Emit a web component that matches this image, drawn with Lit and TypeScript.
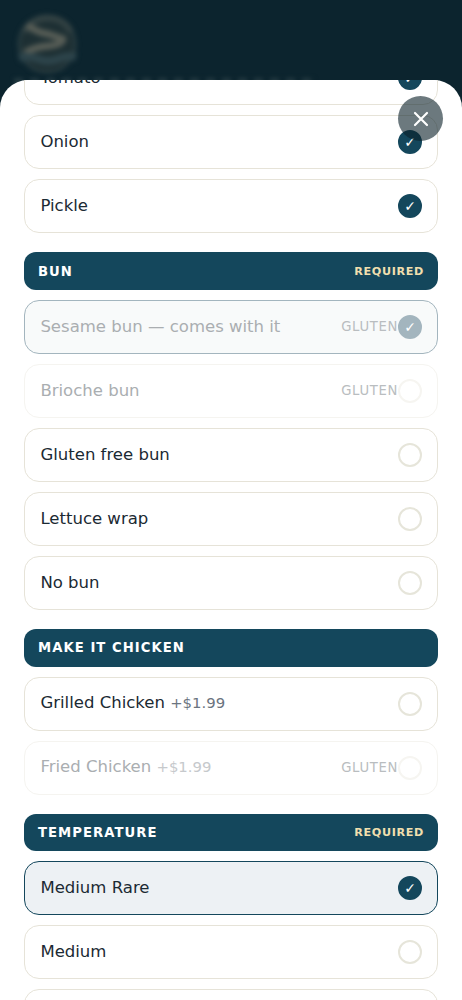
import { LitElement, html, css, nothing } from "lit";
import { customElement, property } from "lit/decorators.js";
import { classMap } from "lit/directives/class-map.js";

interface Choice {
  name: string;
  price?: string;
  flag?: string;
  state?: "checked" | "selected";
}

interface Group {
  title: string;
  required?: boolean;
  choices: Choice[];
}

const groups: Group[] = [
  {
    title: "",
    choices: [
      { name: "Tomato", state: "checked" },
      { name: "Onion", state: "checked" },
      { name: "Pickle", state: "checked" },
    ],
  },
  {
    title: "Bun",
    required: true,
    choices: [
      { name: "Sesame bun — comes with it", flag: "Gluten", state: "selected" },
      { name: "Brioche bun", flag: "Gluten" },
      { name: "Gluten free bun" },
      { name: "Lettuce wrap" },
      { name: "No bun" },
    ],
  },
  {
    title: "Make it chicken",
    choices: [
      { name: "Grilled Chicken", price: "+$1.99" },
      { name: "Fried Chicken", price: "+$1.99", flag: "Gluten" },
    ],
  },
  {
    title: "Temperature",
    required: true,
    choices: [
      { name: "Medium Rare", state: "selected" },
      { name: "Medium" },
      { name: "" },
    ],
  },
];

@customElement("option-row")
export class OptionRow extends LitElement {
  @property({ attribute: false }) choice!: Choice;

  static styles = css`
    :host {
      display: block;
    }
    .row {
      box-sizing: border-box;
      display: flex;
      align-items: center;
      height: 54px;
      padding: 0 15px 0 15.4px;
      border: 1px solid #e6e3d8;
      border-radius: 15px;
      background: #fff;
      color: #1b2a33;
      font-size: 16.53px;
    }
    .row.selected {
      border-color: #14475c;
      background: #edf1f4;
    }
    .row.flagged {
      border-color: #f5f4f0;
      color: #aaaeb1;
    }
    .row.flagged.selected {
      border-color: #a3b5be;
      background: #f8fafa;
    }
    .name {
      flex: 1;
      line-height: 20px;
      padding-bottom: 1px;
    }
    .price {
      color: #6b7480;
      font-size: 14.85px;
    }
    .flagged .price {
      color: #c6c9cc;
    }
    .flag {
      padding-bottom: 1px;
      color: #b9bdc0;
      font-size: 13.2px;
      letter-spacing: 0.66px;
      text-transform: uppercase;
    }
    .mark {
      box-sizing: border-box;
      display: grid;
      place-items: center;
      width: 24px;
      height: 24px;
      border: 2px solid #e6e5da;
      border-radius: 50%;
      color: #fff;
      font-size: 14px;
      font-weight: 700;
      line-height: 1;
    }
    .flagged .mark {
      border-color: #f6f5f1;
    }
    .checked .mark,
    .selected .mark {
      border-color: #14475c;
      background: #14475c;
    }
    .flagged.selected .mark {
      border-color: #a3b5be;
      background: #a3b5be;
    }
  `;

  render() {
    const { name, price, flag, state } = this.choice;
    return html`<div
      class=${classMap({
        row: true,
        flagged: !!flag,
        checked: state === "checked",
        selected: state === "selected",
      })}
    >
      <span class="name"
        >${name}${price ? html` <span class="price">${price}</span>` : nothing}</span
      >
      ${flag ? html`<span class="flag">${flag}</span>` : nothing}
      <span class="mark">${state ? "✓" : nothing}</span>
    </div>`;
  }
}

@customElement("app-root")
export class AppRoot extends LitElement {
  static styles = css`
    :host {
      display: flex;
      flex-direction: column;
      position: relative;
      box-sizing: border-box;
      height: 1000px;
      overflow: hidden;
      background: #0c242e;
      font-family: "DejaVu Sans", sans-serif;
    }
    .backdrop {
      flex: none;
      height: 80.4px;
      padding: 12px 0 0 14px;
      box-sizing: border-box;
    }
    .logo {
      display: block;
      width: 66px;
      height: 66px;
      overflow: visible;
      filter: blur(2.6px);
    }
    .heading {
      width: 300px;
      height: 10px;
      background: repeating-linear-gradient(90deg, #22383f 0 9px, #0c242e 9px 16px);
      filter: blur(2px);
    }
    .sheet {
      flex: 1;
      min-height: 0;
      overflow: hidden;
      border-radius: 28px 28px 0 0;
      background: #fff;
      position: relative;
    }
    .scroller {
      display: flex;
      flex-direction: column;
      gap: 19px;
      padding: 0 24px;
      margin-top: -29px;
    }
    .group {
      display: flex;
      flex-direction: column;
      gap: 10px;
    }
    .head {
      box-sizing: border-box;
      display: flex;
      align-items: center;
      justify-content: space-between;
      height: 37.7px;
      padding: 0 14px;
      border-radius: 12px;
      background: #14475c;
      color: #fff;
      font-size: 13.2px;
      font-weight: 700;
      letter-spacing: 1.05px;
      text-transform: uppercase;
    }
    .required {
      color: #f0dfae;
      font-size: 11.2px;
      letter-spacing: 0.65px;
    }
    .close {
      position: absolute;
      top: 96px;
      right: 19px;
      display: grid;
      place-items: center;
      width: 45px;
      height: 45px;
      padding: 0;
      border: 0;
      border-radius: 50%;
      background: rgba(10, 31, 40, 0.6);
    }
    .close svg {
      display: block;
    }
  `;

  render() {
    return html`
      <div class="backdrop">
        <svg class="logo" viewBox="0 0 66 66">
          <circle cx="33" cy="32" r="28" fill="#1d2f33" stroke="#2b3e42" stroke-width="3" />
          <path
            d="M10 20Q18 6 34 6T57 20"
            fill="none"
            stroke="#344344"
            stroke-width="6"
          />
          <path
            d="M13 13Q24 21 34 22L49 27Q48 33 34 34Q20 35 11 41"
            fill="none"
            stroke="#575d56"
            stroke-width="7"
            stroke-linejoin="round"
          />
          <path
            d="M5 46Q14 43 24 47T44 47T62 45"
            fill="none"
            stroke="#2d444b"
            stroke-width="8"
          />
        </svg>
        <div class="heading"></div>
      </div>
      <div class="sheet">
        <div class="scroller">
          ${groups.map(
            (g) => html`<section class="group">
              ${g.title
                ? html`<div class="head">
                    <span>${g.title}</span>
                    ${g.required ? html`<span class="required">Required</span>` : nothing}
                  </div>`
                : nothing}
              ${g.choices.map((c) => html`<option-row .choice=${c}></option-row>`)}
            </section>`
          )}
        </div>
      </div>
      <button class="close" aria-label="Close">
        <svg width="16" height="16" viewBox="0 0 16 16">
          <path
            d="M2 2L14 14M14 2L2 14"
            fill="none"
            stroke="#fff"
            stroke-width="2.2"
            stroke-linecap="round"
          />
        </svg>
      </button>
    `;
  }
}
